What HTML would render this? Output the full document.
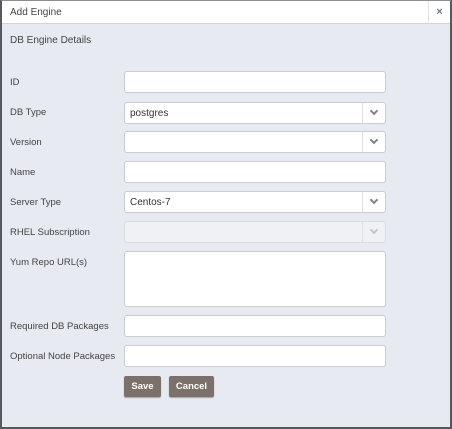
<!DOCTYPE html>
<html><head><style>
*{box-sizing:border-box;margin:0;padding:0}
body{width:452px;height:429px;overflow:hidden;background:#e7eaf1;font-family:"Liberation Sans",sans-serif;font-size:9.5px;color:#333;position:relative}
.frame{position:absolute;left:0;top:0;width:452px;height:429px;border:1px solid #8a8d93;border-left:2px solid #55585d;border-right:2px solid #55585d;border-bottom:2px solid #55585d}
.hdr{position:absolute;left:2px;top:1px;width:448px;height:23px;background:#fff;border-bottom:1px solid #cfd3da}
.hdr span{position:absolute;left:8px;top:6px;font-size:10px;color:#444}
.x{position:absolute;right:0;top:0;width:22px;height:23px;border-left:1px solid #dde0e5;color:#6a7a8f;font-size:11px;font-weight:bold;text-align:center;line-height:23px}
.sec{position:absolute;left:10px;top:35px;font-size:10px;color:#444}
.l{position:absolute;left:10px;font-size:9.5px;color:#444}
.i{position:absolute;left:124px;width:262px;height:22px;background:#fff;border:1px solid #c9ccd2;border-radius:3px;font-size:10px;padding:5px 5px;color:#333}
.i.s::after{content:"";position:absolute;right:0;top:0;width:22px;height:20px;border-left:1px solid #dfe1e5}
.i.s::before{content:"";position:absolute;right:8px;top:5px;width:4px;height:4px;border-right:2px solid #7d838b;border-bottom:2px solid #7d838b;transform:rotate(45deg)}
.i.d{background:#eff1f5;border-color:#d8dbe0}
.i.d::before{border-color:#c2c6cc}
.b{position:absolute;top:376px;height:21px;background:#7b716a;color:#fff;font-size:9.5px;font-weight:bold;text-align:center;line-height:21px;border-radius:2px;box-shadow:0 1px 1px rgba(0,0,0,.3)}
</style></head><body>
<div class="frame"></div>
<div class="hdr"><span>Add Engine</span><div class="x">×</div></div>
<div class="sec">DB Engine Details</div>
<div class="l" style="top:77px">ID</div><div class="i" style="top:71px"></div>
<div class="l" style="top:107px">DB Type</div><div class="i s" style="top:102px">postgres</div>
<div class="l" style="top:137px">Version</div><div class="i s" style="top:131px"></div>
<div class="l" style="top:167px">Name</div><div class="i" style="top:161px"></div>
<div class="l" style="top:197px">Server Type</div><div class="i s" style="top:191px">Centos-7</div>
<div class="l" style="top:227px">RHEL Subscription</div><div class="i s d" style="top:221px"></div>
<div class="l" style="top:257px">Yum Repo URL(s)</div><div class="i" style="top:251px;height:56px"></div>
<div class="l" style="top:321px">Required DB Packages</div><div class="i" style="top:315px"></div>
<div class="l" style="top:351px">Optional Node Packages</div><div class="i" style="top:345px"></div>
<div class="b" style="left:124px;width:37px">Save</div>
<div class="b" style="left:169px;width:45px">Cancel</div>
</body></html>
